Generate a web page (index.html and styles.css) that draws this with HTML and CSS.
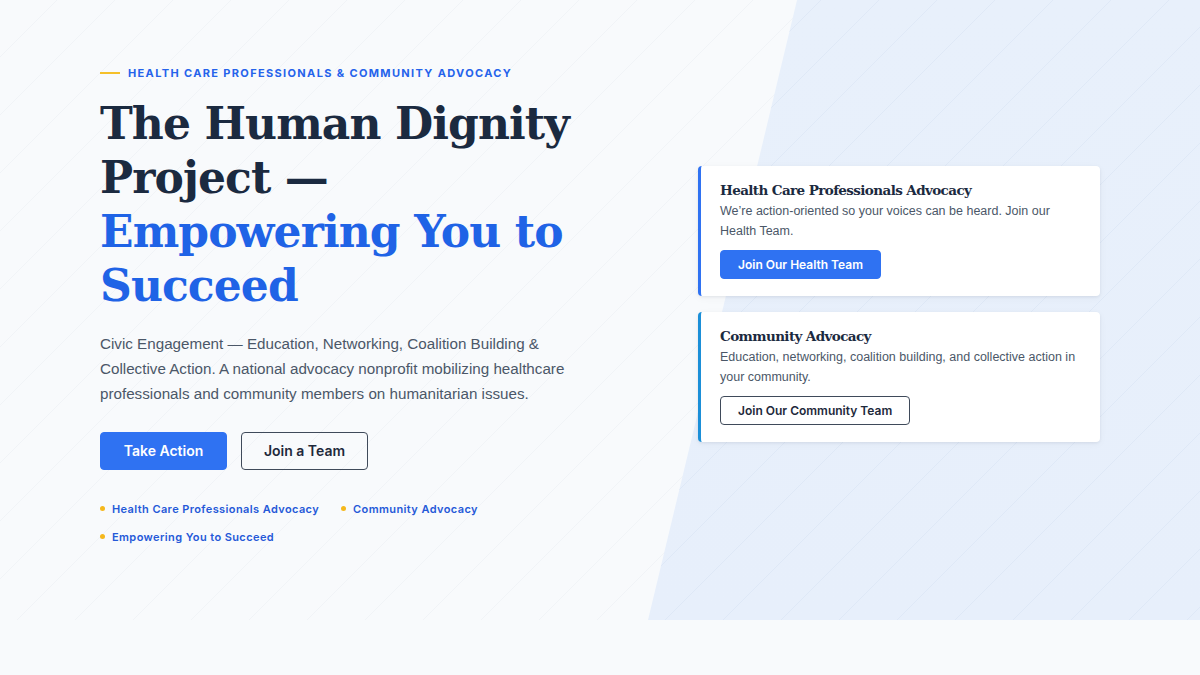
FILE: index.html
```html
<!DOCTYPE html>
<html lang="en">
<head>
<meta charset="utf-8">
<title>The Human Dignity Project</title>
<link rel="stylesheet" href="styles.css">
</head>
<body>
<section class="hero">
  <div class="hero-panel"></div>
  <div class="hero-inner">
    <div class="hero-copy">
      <div class="eyebrow"><span class="eyebrow-line"></span>HEALTH CARE PROFESSIONALS &amp; COMMUNITY ADVOCACY</div>
      <h1 class="title">The Human Dignity Project — <span class="accent">Empowering You to Succeed</span></h1>
      <p class="lead">Civic Engagement — Education, Networking, Coalition Building &amp; Collective Action. A national advocacy nonprofit mobilizing healthcare professionals and community members on humanitarian issues.</p>
      <div class="actions">
        <a class="btn btn-primary" href="#">Take Action</a>
        <a class="btn btn-outline" href="#">Join a Team</a>
      </div>
      <ul class="tags">
        <li>Health Care Professionals Advocacy</li>
        <li>Community Advocacy</li>
        <li>Empowering You to Succeed</li>
      </ul>
    </div>
    <div class="hero-cards">
      <div class="card card-health">
        <h3 class="card-title">Health Care Professionals Advocacy</h3>
        <p class="card-text">We’re action-oriented so your voices can be heard. Join our Health Team.</p>
        <a class="btn btn-primary btn-sm" href="#">Join Our Health Team</a>
      </div>
      <div class="card card-community">
        <h3 class="card-title">Community Advocacy</h3>
        <p class="card-text">Education, networking, coalition building, and collective action in your community.</p>
        <a class="btn btn-outline btn-sm" href="#">Join Our Community Team</a>
      </div>
    </div>
  </div>
</section>
</body>
</html>
```
FILE: styles.css
```css
* { box-sizing: border-box; }
html, body { margin: 0; padding: 0; }
body {
  background: #f8fafc;
  font-family: Inter, "Noto Sans", sans-serif;
  color: #1e293b;
}
.hero {
  position: relative;
  height: 620px;
  overflow: hidden;
  background-color: #f8fafc;
  background-image: repeating-linear-gradient(135deg, rgba(148,163,184,0) 0px, rgba(148,163,184,0) 40px, rgba(148,163,184,0.07) 40px, rgba(148,163,184,0.07) 41px);
}
.hero-panel {
  position: absolute;
  top: 0; right: 0; bottom: 0;
  width: 552px;
  clip-path: polygon(27% 0, 100% 0, 100% 100%, 0 100%);
  background-image: repeating-linear-gradient(135deg, rgba(255,255,255,0) 0px, rgba(255,255,255,0) 40px, rgba(200,214,236,0.28) 40px, rgba(200,214,236,0.28) 41px), linear-gradient(180deg, #e8f0fb, #e7effb);
}
.hero-inner {
  position: relative;
  height: 100%;
  width: 1000px;
  margin: 0 auto;
  display: grid;
  grid-template-columns: 540px 402px;
  column-gap: 58px;
  align-items: center;
}
.hero-copy { margin-bottom: 10px; }
.eyebrow {
  display: flex;
  align-items: center;
  gap: 8px;
  font-size: 11px;
  font-weight: 700;
  letter-spacing: 1.35px;
  color: #2563eb;
  line-height: 16px;
}
.eyebrow-line {
  width: 20px;
  height: 2px;
  background: #f5c02a;
}
.title {
  margin: 16px 0 0;
  font-family: "DejaVu Serif", Georgia, serif;
  font-weight: 700;
  font-size: 44px;
  line-height: 54px;
  color: #1b2a40;
  letter-spacing: -0.9px;
}
.accent { color: #1f63e6; }
.lead {
  margin: 18px 0 0;
  font-family: "Liberation Sans", Arial, sans-serif;
  font-size: 15.2px;
  line-height: 25px;
  color: #4b5768;
  max-width: 480px;
}
.actions {
  display: flex;
  gap: 14px;
  margin-top: 26px;
}
.btn {
  display: inline-flex;
  align-items: center;
  justify-content: center;
  text-decoration: none;
  font-weight: 600;
  border-radius: 4px;
  font-size: 14px;
}
.actions .btn { width: 127px; height: 38px; }
.btn-primary { background: #2f72f2; color: #ffffff; border: 1px solid #2f72f2; }
.btn-outline { background: #ffffff; color: #1e293b; border: 1px solid #3f4a5a; }
.actions .btn-outline { background: transparent; }
.tags {
  list-style: none;
  margin: 30px 0 0;
  padding: 0;
  display: flex;
  flex-wrap: wrap;
  column-gap: 22px;
  row-gap: 10px;
  max-width: 400px;
}
.tags li {
  display: flex;
  align-items: center;
  gap: 7px;
  font-size: 11px;
  font-weight: 600;
  letter-spacing: 0.4px;
  color: #2559d8;
  line-height: 18px;
}
.tags li::before {
  content: "";
  width: 5px;
  height: 5px;
  border-radius: 50%;
  background: #f5b81c;
}
.hero-cards {
  display: flex;
  flex-direction: column;
  gap: 16px;
  margin-bottom: 12px;
}
.card {
  background: #ffffff;
  border-radius: 4px;
  border-left: 3px solid #2f72f2;
  padding: 14px 20px 17px 19px;
  box-shadow: 0 1px 3px rgba(15,23,42,0.07), 0 2px 8px rgba(15,23,42,0.04);
}
.card-community { border-left-color: #1b8fd8; }
.card-title {
  margin: 0;
  font-family: "DejaVu Serif", Georgia, serif;
  font-weight: 700;
  font-size: 13.5px;
  line-height: 20px;
  color: #1b2a40;
  letter-spacing: -0.6px;
}
.card-text {
  margin: 1px 0 0;
  font-family: "Liberation Sans", Arial, sans-serif;
  font-size: 12.5px;
  line-height: 20px;
  color: #4b5768;
}
.btn-sm {
  margin-top: 9px;
  height: 29px;
  padding: 0 17px;
  font-size: 12px;
}
```
